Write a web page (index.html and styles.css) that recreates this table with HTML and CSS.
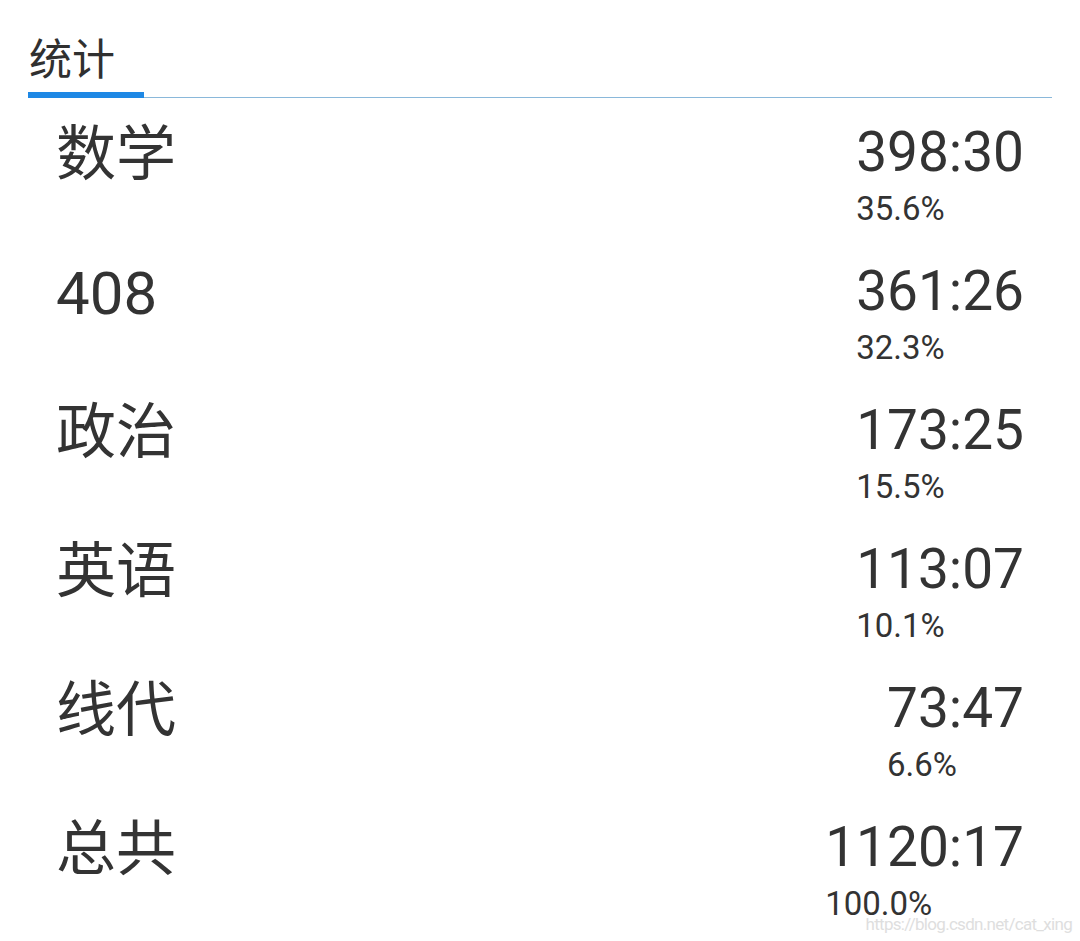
FILE: index.html
```html
<!DOCTYPE html>
<html lang="zh-CN">
<head>
<meta charset="utf-8">
<title>统计</title>
<link rel="stylesheet" href="styles.css">
</head>
<body>
<div class="page">
  <div class="tabs">
    <div class="tab active">统计</div>
  </div>
  <div class="list">
    <div class="row">
      <div class="label">数学</div>
      <div class="stat"><div class="time">398:30</div><div class="pct">35.6%</div></div>
    </div>
    <div class="row">
      <div class="label">408</div>
      <div class="stat"><div class="time">361:26</div><div class="pct">32.3%</div></div>
    </div>
    <div class="row">
      <div class="label">政治</div>
      <div class="stat"><div class="time">173:25</div><div class="pct">15.5%</div></div>
    </div>
    <div class="row">
      <div class="label">英语</div>
      <div class="stat"><div class="time">113:07</div><div class="pct">10.1%</div></div>
    </div>
    <div class="row">
      <div class="label">线代</div>
      <div class="stat"><div class="time">73:47</div><div class="pct">6.6%</div></div>
    </div>
    <div class="row">
      <div class="label">总共</div>
      <div class="stat"><div class="time">1120:17</div><div class="pct">100.0%</div></div>
    </div>
  </div>
  <div class="watermark">https://blog.csdn.net/cat_xing</div>
</div>
</body>
</html>
```
FILE: styles.css
```css
html, body {
  margin: 0;
  padding: 0;
  background: #ffffff;
}
body {
  font-family: Roboto, "Noto Sans CJK SC", sans-serif;
  color: #333333;
}
.page {
  position: relative;
  width: 1080px;
  height: 941px;
  overflow: hidden;
}
.tabs {
  margin: 0 28px;
  padding-top: 20px;
  border-bottom: 1px solid #8ab8da;
  display: flex;
}
.tab {
  font-size: 43px;
  line-height: 72px;
  padding: 0 1px;
  width: 116px;
  box-sizing: border-box;
  font-family: "Noto Sans CJK SC", sans-serif;
  color: #303030;
}
.tab.active {
  border-bottom: 6px solid #1e88e5;
  margin-bottom: -1px;
}
.list {
  display: flex;
  flex-direction: column;
}
.row {
  height: 139px;
  box-sizing: border-box;
  padding: 0 56px 0 56px;
  display: flex;
  justify-content: space-between;
  align-items: flex-start;
}
.label {
  font-size: 60px;
  line-height: 64px;
  padding-top: 25px;
}
.stat {
  display: flex;
  flex-direction: column;
  align-items: flex-start;
  padding-top: 23px;
}
.time {
  font-size: 55px;
  line-height: 62px;
}
.pct {
  font-size: 33px;
  line-height: 36px;
  margin-top: 8px;
}
.watermark {
  position: absolute;
  right: 8px;
  bottom: 7px;
  font-family: Roboto, sans-serif;
  font-size: 17px;
  letter-spacing: -0.7px;
  color: #dedede;
}
```
